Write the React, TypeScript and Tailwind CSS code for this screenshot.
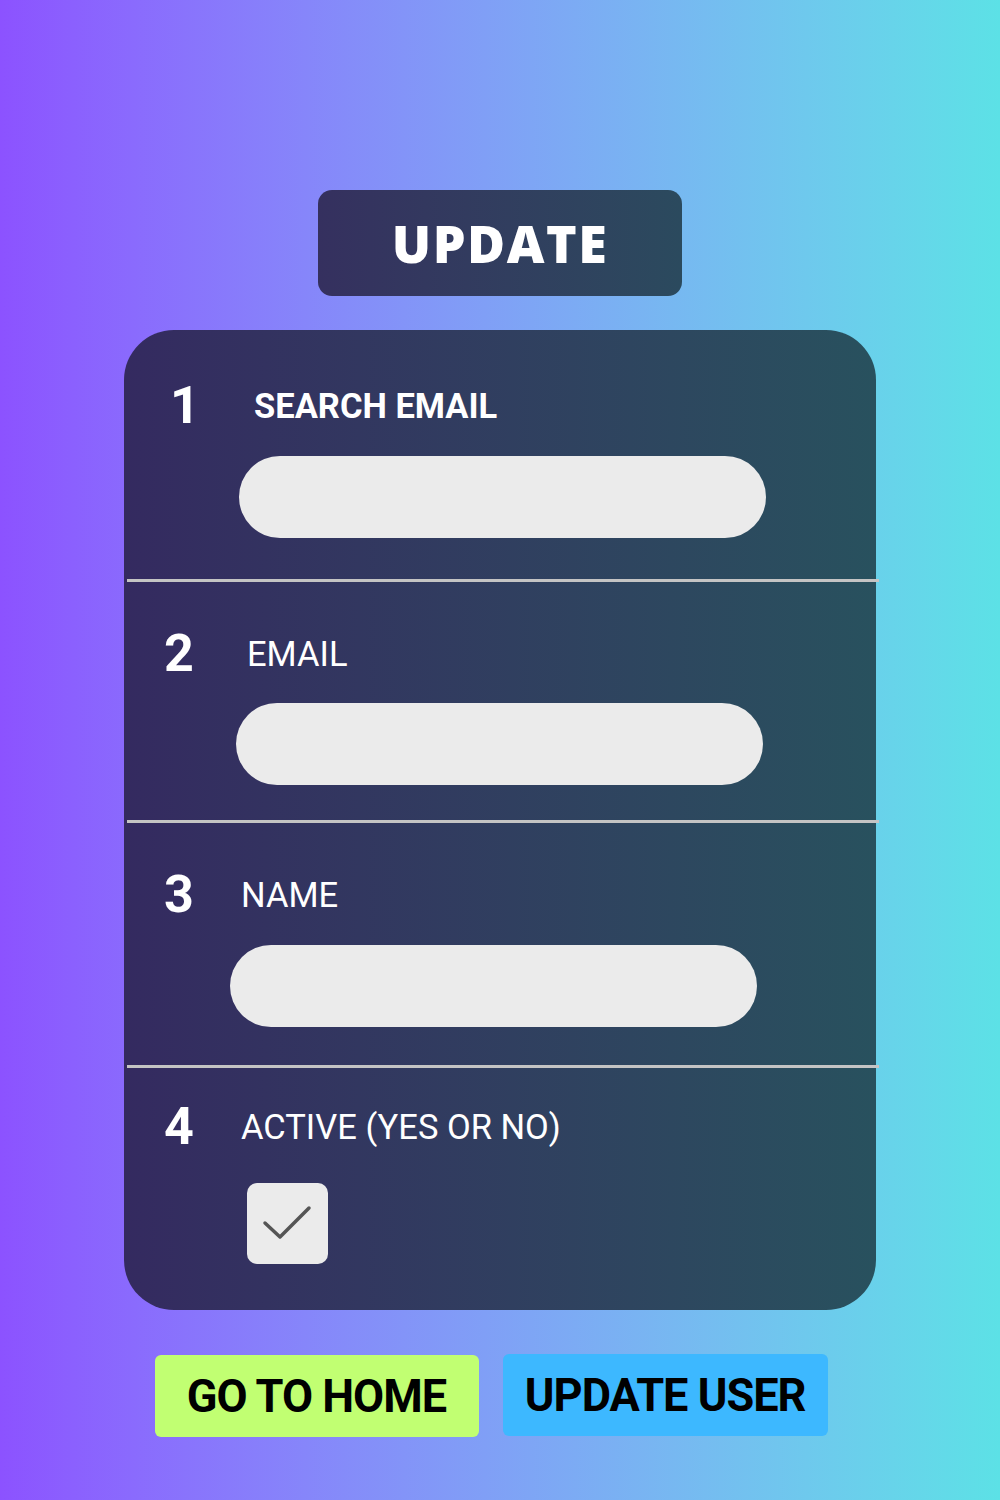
import React from "react";

const roboto = { fontFamily: "Roboto, 'Liberation Sans', sans-serif" };

function Field({
  num,
  label,
  bold,
  numMl,
  labelMl,
  inputMl,
  pt,
  gap,
  pb,
}: {
  num: string;
  label: string;
  bold?: boolean;
  numMl: string;
  labelMl: string;
  inputMl: string;
  pt: string;
  gap: string;
  pb: string;
}) {
  return (
    <div className={`flex flex-col ${pt} ${pb}`}>
      <div className="flex h-[60px] items-center pl-[40px]">
        <span className={`w-[76px] text-[52px] font-bold leading-none text-white ${numMl}`}>{num}</span>
        <span
          className={`text-[34.5px] leading-none text-white ${bold ? "font-bold" : "font-normal"} ${labelMl}`}
        >
          {label}
        </span>
      </div>
      <div className={`${gap} ${inputMl} h-[82px] w-[527px] rounded-full bg-[#ebebeb]`} />
    </div>
  );
}

function Divider() {
  return <div className="ml-[3px] mr-[-3px] h-[3px] bg-[#c4c4c4]" />;
}

export default function App() {
  return (
    <div
      className="flex min-h-[1500px] w-full flex-col items-center bg-gradient-to-r from-[#8c52ff] to-[#5ce1e6]"
      style={roboto}
    >
      <div className="mt-[190px] flex h-[106px] w-[364px] items-center justify-center rounded-[14px] bg-gradient-to-r from-[#35305f] to-[#2b4a5e]">
        <span
          className="text-[52px] font-extrabold leading-none tracking-[1.5px] text-white"
          style={{ fontFamily: "'Open Sans', sans-serif" }}
        >
          UPDATE
        </span>
      </div>

      <div className="mt-[34px] w-[752px] rounded-[50px] bg-gradient-to-r from-[#342a60] to-[#28515e]">
        <Field
          num="1"
          label="SEARCH EMAIL"
          bold
          numMl="ml-[6px]"
          labelMl="ml-[8px]"
          inputMl="ml-[115px]"
          pt="pt-[46px]"
          gap="mt-[20px]"
          pb="pb-[41px]"
        />
        <Divider />
        <Field
          num="2"
          label="EMAIL"
          numMl="ml-0"
          labelMl="ml-[7px]"
          inputMl="ml-[112px]"
          pt="pt-[42px]"
          gap="mt-[19px]"
          pb="pb-[35px]"
        />
        <Divider />
        <Field
          num="3"
          label="NAME"
          numMl="ml-0"
          labelMl="ml-[1px]"
          inputMl="ml-[106px]"
          pt="pt-[42px]"
          gap="mt-[20px]"
          pb="pb-[38px]"
        />
        <Divider />
        <div className="flex flex-col pt-[29px] pb-[46px]">
          <div className="flex h-[60px] items-center pl-[40px]">
            <span className="w-[76px] text-[52px] font-bold leading-none text-white">4</span>
            <span className="ml-[1px] text-[34.5px] leading-none text-white">ACTIVE (YES OR NO)</span>
          </div>
          <div className="ml-[123px] mt-[26px] h-[81px] w-[81px] rounded-[10px] bg-[#ebebeb]">
            <svg width="81" height="81" viewBox="0 0 81 81" fill="none">
              <path d="M18 40 L33 54 L62 25" stroke="#555555" strokeWidth="3.5" strokeLinecap="round" strokeLinejoin="round" />
            </svg>
          </div>
        </div>
      </div>

      <div className="mt-[45px] mr-[18px] flex gap-[24px]">
        <button className="flex h-[82px] w-[324px] items-center justify-center rounded-[6px] bg-[#c1ff72]">
          <span className="inline-block scale-x-[0.98] text-[46px] font-bold leading-none tracking-[-1px] text-black">
            GO TO HOME
          </span>
        </button>
        <button className="-mt-px flex h-[82px] w-[325px] items-center justify-center rounded-[6px] bg-[#3db8ff]">
          <span className="inline-block scale-x-[0.98] text-[46px] font-bold leading-none tracking-[-1px] text-black">
            UPDATE USER
          </span>
        </button>
      </div>
    </div>
  );
}
